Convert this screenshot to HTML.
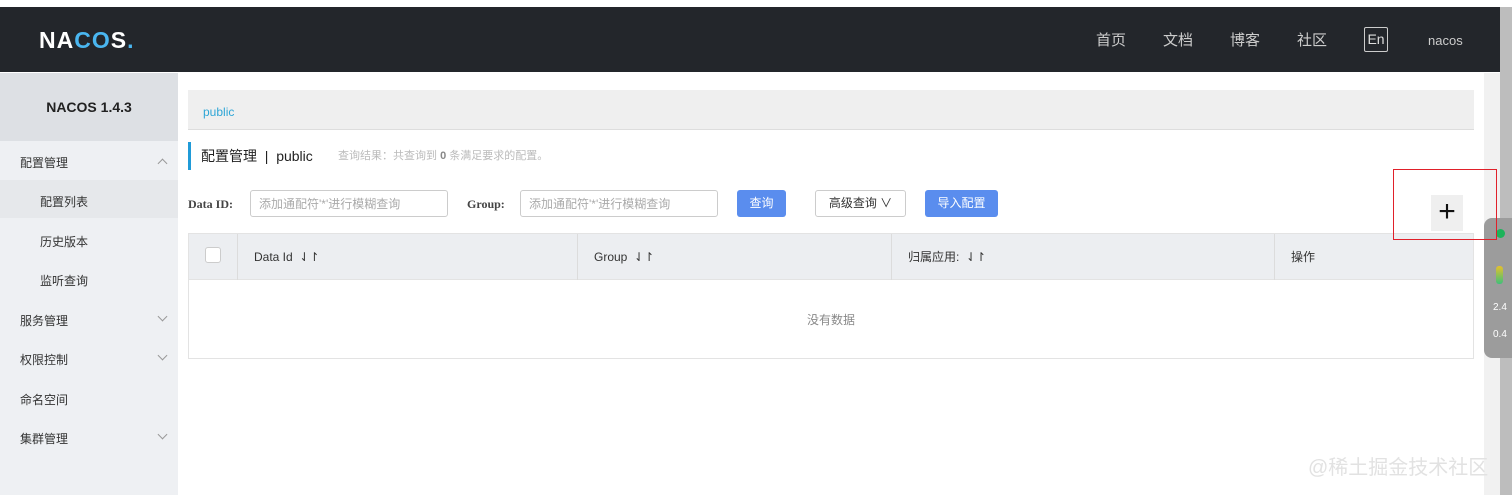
<!DOCTYPE html>
<html><head><meta charset="utf-8"><style>
*{margin:0;padding:0;box-sizing:border-box}
body{width:1512px;height:495px;overflow:hidden;background:#fff;font-family:"Liberation Sans","Noto Sans CJK SC",sans-serif;position:relative;font-size:12px;color:#333;line-height:1}
.hdr{position:absolute;left:0;top:7px;width:1500px;height:65px;background:#23262b}
.logo{position:absolute;left:39px;top:22px;color:#fff;font-size:23px;font-weight:bold;letter-spacing:1px}
.nav{position:absolute;top:26px;color:#ccc;font-size:15px}
.en{position:absolute;left:1364px;top:20px;width:24px;height:25px;border:1px solid #ccc;border-radius:2px;color:#ddd;font-size:14px;text-align:center;line-height:22px}
.side{position:absolute;left:0;top:73px;width:178px;height:422px;background:#eef0f3}
.sh{height:68px;background:#dde0e4;text-align:center;line-height:68px;font-weight:bold;font-size:14px;color:#222}
.mi{position:absolute;left:20px;font-size:12px;color:#333}
.sub{left:40px}
.car{position:absolute;left:159px;width:7px;height:7px;border-left:1px solid #999;border-bottom:1px solid #999}
.bc{position:absolute;left:188px;top:90px;width:1286px;height:40px;background:#efefef;border-bottom:1px solid #ddd}
.bc span{position:absolute;left:15px;top:16px;color:#2fa6d6;font-size:12px}
.title{position:absolute;left:188px;top:142px;height:28px;border-left:3px solid #209bd8;padding-left:10px;font-size:14px;line-height:28px;color:#222}
.hint{position:absolute;left:338px;top:151px;color:#bbb;font-size:11px}
.lbl{position:absolute;top:198px;font-weight:bold;color:#444;font-size:12px;font-family:"Liberation Serif","Noto Sans CJK SC",serif}
.inp{position:absolute;top:190px;height:27px;border:1px solid #ccc;border-radius:3px;color:#aaa;font-size:12px;padding:7px 8px}
.btn{position:absolute;top:190px;height:27px;border-radius:3px;background:#5a8dee;color:#fff;font-size:12px;text-align:center;line-height:27px}
.tbl{position:absolute;left:188px;top:233px;width:1286px;height:126px;border:1px solid #e3e3e3}
.th{position:absolute;left:0;top:0;width:1284px;height:46px;background:#eceef1;border-bottom:1px solid #e3e3e3}
.col{position:absolute;top:0;height:46px;border-left:1px solid #dcdcdc;font-size:12px;line-height:46px;padding-left:16px;color:#333}
.plus{position:absolute;left:1431px;top:195px;width:32px;height:36px;background:#efefef;text-align:center;font-size:30px;line-height:34px;color:#111;font-weight:300}
.red{position:absolute;left:1393px;top:169px;width:104px;height:71px;border:1px solid #e0202a;z-index:5}
</style></head><body>
<div class="hdr">
<div class="logo">NA<span style="color:#4ab6f0">CO</span>S<span style="color:#4ab6f0">.</span></div>
<div class="nav" style="left:1096px">首页</div>
<div class="nav" style="left:1163px">文档</div>
<div class="nav" style="left:1230px">博客</div>
<div class="nav" style="left:1297px">社区</div>
<div class="en">En</div>
<div class="nav" style="left:1428px;font-size:13px;top:27px">nacos</div>
</div>
<div class="side"><div class="sh">NACOS 1.4.3</div>
<div style="position:absolute;top:107px;left:0;width:178px;height:38px;background:#e6e8eb"></div>
<div class="mi" style="top:84px">配置管理</div><div class="car" style="top:87px;transform:rotate(135deg)"></div>
<div class="mi sub" style="top:123px">配置列表</div>
<div class="mi sub" style="top:163px">历史版本</div>
<div class="mi sub" style="top:202px">监听查询</div>
<div class="mi" style="top:242px">服务管理</div><div class="car" style="top:240px;transform:rotate(-45deg)"></div>
<div class="mi" style="top:281px">权限控制</div><div class="car" style="top:279px;transform:rotate(-45deg)"></div>
<div class="mi" style="top:321px">命名空间</div>
<div class="mi" style="top:360px">集群管理</div><div class="car" style="top:358px;transform:rotate(-45deg)"></div>
</div>
<div class="bc"><span>public</span></div>
<div class="title">配置管理 &nbsp;|&nbsp; public</div>
<div class="hint">查询结果：共查询到 <b style="color:#888">0</b> 条满足要求的配置。</div>
<div class="lbl" style="left:188px">Data ID:</div>
<div class="inp" style="left:250px;width:198px">添加通配符'*'进行模糊查询</div>
<div class="lbl" style="left:467px">Group:</div>
<div class="inp" style="left:520px;width:198px">添加通配符'*'进行模糊查询</div>
<div class="btn" style="left:737px;width:49px">查询</div>
<div class="btn" style="left:815px;width:91px;background:#fff;border:1px solid #ccc;color:#333;line-height:25px">高级查询 ∨</div>
<div class="btn" style="left:925px;width:73px">导入配置</div>
<div class="tbl"><div class="th">
<div style="position:absolute;left:16px;top:13px;width:16px;height:16px;border:1px solid #ccc;border-radius:3px;background:#fff"></div>
<div class="col" style="left:48px;width:340px">Data Id &nbsp;⇃↾</div>
<div class="col" style="left:388px;width:314px">Group &nbsp;⇃↾</div>
<div class="col" style="left:702px;width:383px">归属应用: &nbsp;⇃↾</div>
<div class="col" style="left:1085px;width:199px">操作</div>
</div>
<div style="position:absolute;top:80px;width:100%;text-align:center;color:#888">没有数据</div></div>
<div class="plus">+</div>
<div class="red"></div>
<div style="position:absolute;left:1484px;top:73px;width:16px;height:422px;background:#f1f1f1"></div>
<div style="position:absolute;left:1500px;top:7px;width:12px;height:488px;background:#bdbdbd"></div>
<div style="position:absolute;left:1484px;top:218px;width:28px;height:140px;background:#9c9c9c;border-radius:8px 0 0 8px"></div>
<div style="position:absolute;left:1496px;top:229px;width:9px;height:9px;border-radius:50%;background:#1db35a"></div>
<div style="position:absolute;left:1496px;top:266px;width:7px;height:18px;border-radius:3px;background:linear-gradient(#e6c02c,#3fc07a)"></div>
<div style="position:absolute;left:1493px;top:303px;color:#fff;font-size:10px">2.4</div>
<div style="position:absolute;left:1493px;top:330px;color:#fff;font-size:10px">0.4</div>
<div style="position:absolute;left:1308px;top:458px;color:#e2e2e2;font-size:20px">@稀土掘金技术社区</div>
</body></html>
